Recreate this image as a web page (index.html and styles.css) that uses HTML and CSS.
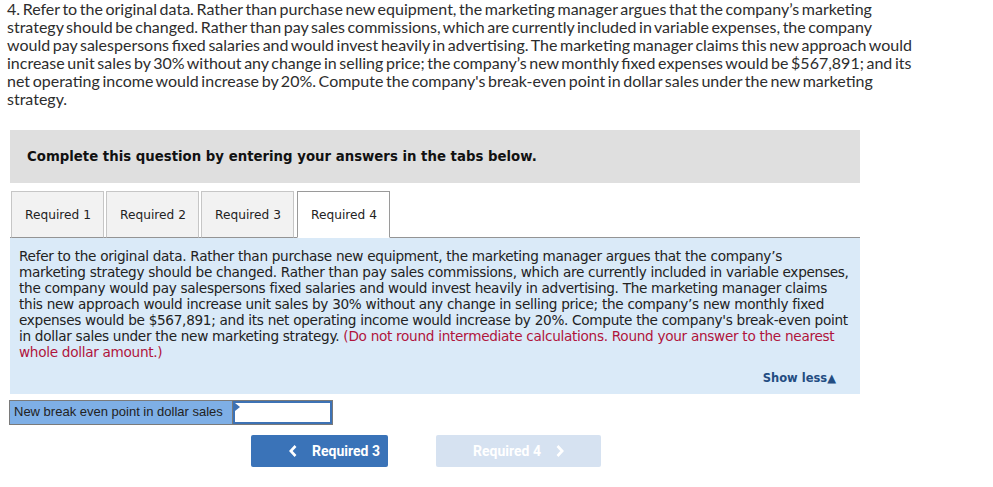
FILE: index.html
```html
<!DOCTYPE html>
<html lang="en">
<head>
  <meta charset="UTF-8" />
  <title>Required 4</title>
  <link rel="stylesheet" href="styles.css">
</head>
<body>
  <p class="question">4. Refer to the original data. Rather than purchase new equipment, the marketing manager argues that the company’s marketing strategy should be changed. Rather than pay sales commissions, which are currently included in variable expenses, the company would pay salespersons fixed salaries and would invest heavily in advertising. The marketing manager claims this new approach would increase unit sales by 30% without any change in selling price; the company’s new monthly fixed expenses would be $567,891; and its net operating income would increase by 20%. Compute the company's break-even point in dollar sales under the new marketing strategy.</p>

  <div class="wrap">
    <div class="banner">Complete this question by entering your answers in the tabs below.</div>

    <div class="tabs">
      <button class="tab">Required 1</button>
      <button class="tab">Required 2</button>
      <button class="tab">Required 3</button>
      <button class="tab active">Required 4</button>
    </div>

    <div class="panel">
      <p>Refer to the original data. Rather than purchase new equipment, the marketing manager argues that the company’s marketing strategy should be changed. Rather than pay sales commissions, which are currently included in variable expenses, the company would pay salespersons fixed salaries and would invest heavily in advertising. The marketing manager claims this new approach would increase unit sales by 30% without any change in selling price; the company’s new monthly fixed expenses would be $567,891; and its net operating income would increase by 20%. Compute the company's break-even point in dollar sales under the new marketing strategy. <span class="note">(Do not round intermediate calculations. Round your answer to the nearest whole dollar amount.)</span></p>
      <div class="show-less">Show less▲</div>
    </div>

    <div class="answer">
      <div class="answer-label">New break even point in dollar sales</div>
      <div class="answer-input"><input type="text" /></div>
    </div>

    <div class="nav">
      <button class="nav-btn prev">
        <svg class="chev" width="8" height="12" viewBox="0 0 8 12"><polyline points="6.5,1 1.8,6 6.5,11" fill="none" stroke="#fff" stroke-width="2.6"/></svg>
        Required 3
      </button>
      <button class="nav-btn next" disabled>
        Required 4
        <svg class="chev" width="8" height="12" viewBox="0 0 8 12"><polyline points="1.5,1 6.2,6 1.5,11" fill="none" stroke="#fff" stroke-width="2.6"/></svg>
      </button>
    </div>
  </div>
</body>
</html>
```

FILE: styles.css
```css
* {
  box-sizing: border-box;
}
body {
  margin: 0;
  background: #fff;
  color: #222;
}
.question {
  margin: 0;
  padding: 0 7px;
  width: 922px;
  font-family: Lato, sans-serif;
  font-size: 16px;
  line-height: 18px;
  word-spacing: -1.5px;
  color: #2d2d2d;
}
.wrap {
  width: 850px;
  margin: 22px 0 0 10px;
  font-family: "DejaVu Sans", Verdana, sans-serif;
}
.banner {
  background: #dfdfdf;
  height: 53px;
  padding: 0 17px;
  display: flex;
  align-items: center;
  font-size: 13.3px;
  font-weight: bold;
  color: #111;
}
.tabs {
  display: flex;
  gap: 2px;
  margin-top: 8px;
  padding-left: 1px;
  border-bottom: 1px solid #949494;
}
.tab {
  width: 93px;
  height: 47px;
  margin-bottom: -1px;
  background: #f2f2f2;
  border: 1px solid #c6c6c6;
  border-bottom: 1px solid #949494;
  font-family: "DejaVu Sans", Verdana, sans-serif;
  font-size: 12.2px;
  color: #222;
  padding: 0 0 0 1px;
  cursor: pointer;
}
.tab.active {
  background: #fff;
  border-color: #9a9a9a;
  border-bottom-color: #fff;
  margin-left: 1px;
}
.panel {
  background: #daeaf8;
  padding: 10px 9px 8px;
  font-size: 13.64px;
  letter-spacing: -0.3px;
  line-height: 16px;
  color: #222;
}
.panel p {
  margin: 0;
}
.note {
  color: #b0143c;
}
.show-less {
  text-align: right;
  margin-top: 10px;
  padding-right: 15px;
  font-weight: bold;
  font-size: 11.5px;
  letter-spacing: 0;
  color: #234d82;
}
.answer {
  display: flex;
  margin: 6px 0 0 -1px;
  height: 25px;
}
.answer-label {
  width: 223px;
  background: #7eafe6;
  border: 1px solid #7a7a7a;
  border-right: none;
  font-family: "Liberation Sans", Arial, sans-serif;
  font-size: 13px;
  color: #222;
  padding: 3px 0 0 4px;
}
.answer-input {
  position: relative;
  width: 101px;
  border: 1px solid #7a7a7a;
  padding: 0;
}
.answer-input input {
  width: 100%;
  height: 100%;
  border: 2px solid #3d72b5;
  outline: none;
  margin: 0;
}
.answer-input::before {
  content: "";
  position: absolute;
  left: 2px;
  top: 2px;
  border-top: 4px solid transparent;
  border-bottom: 4px solid transparent;
  border-left: 5px solid #3d72b5;
}
.nav {
  display: flex;
  gap: 48px;
  margin: 10px 0 0 241px;
}
.nav-btn {
  height: 32px;
  border: none;
  border-radius: 2px;
  font-family: Roboto, "Liberation Sans", sans-serif;
  font-weight: bold;
  font-size: 14px;
  color: #fff;
  display: flex;
  align-items: center;
  padding: 0;
}
.prev {
  width: 137px;
  background: #3a73b8;
  cursor: pointer;
  padding-left: 38px;
  gap: 15px;
}
.next {
  width: 165px;
  background: #d6e2f1;
  padding-left: 37px;
  gap: 15px;
}
```
